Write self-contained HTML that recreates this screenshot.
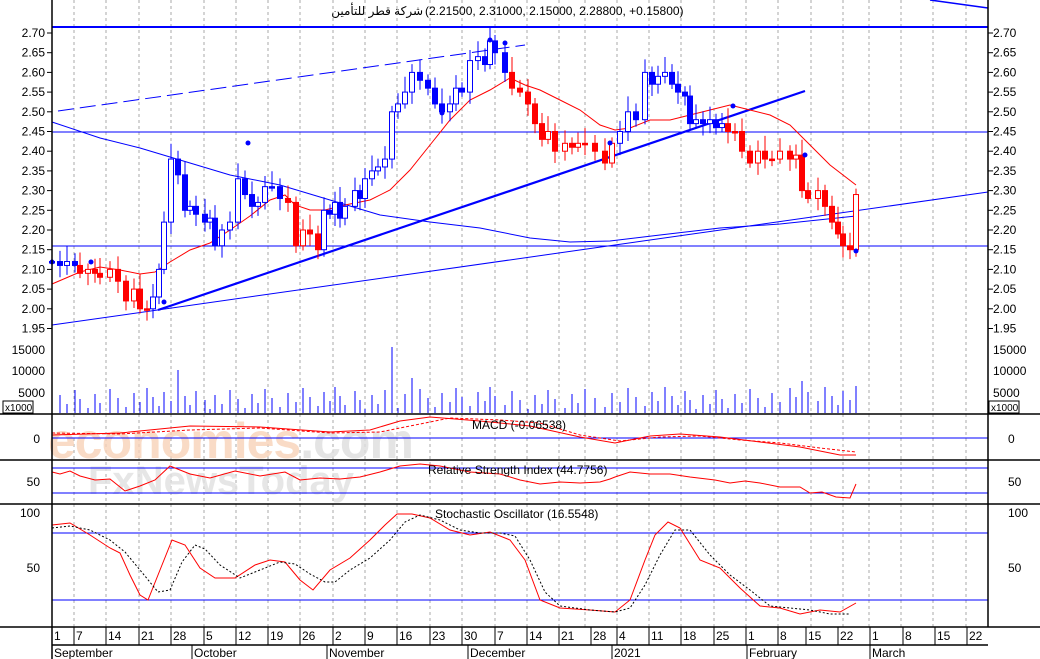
<!DOCTYPE html>
<html><head><meta charset="utf-8"><style>
html,body{margin:0;padding:0;background:#fff;}
svg{display:block;font-family:"Liberation Sans","DejaVu Sans",sans-serif;}
</style></head><body>
<svg id="s" width="1040" height="659" viewBox="0 0 1040 659" xmlns="http://www.w3.org/2000/svg">
<rect width="1040" height="659" fill="#fff"/>
<g id="grid" stroke="#aaa" stroke-dasharray="3,3" stroke-width="1"></g>
<text x="48" y="458" font-size="50" fill="#f8d3b8" opacity="0.8" font-weight="bold" letter-spacing="-1">economies<tspan fill="#dedede">.com</tspan></text>
<text x="88" y="494" font-size="40" fill="#e0e0e0" opacity="0.8" font-weight="bold">FxNewsToday</text>
<line x1="52" y1="27" x2="988" y2="27" stroke="#00f" stroke-width="2"/>
<line x1="52" y1="132" x2="988" y2="132" stroke="#00f"/>
<line x1="52" y1="246" x2="988" y2="246" stroke="#00f"/>
<line x1="930" y1="0" x2="988" y2="8" stroke="#00f" stroke-width="1.5"/>
<line x1="158" y1="310" x2="805" y2="91" stroke="#00f" stroke-width="2.2"/>
<line x1="52" y1="325" x2="988" y2="192" stroke="#00f"/>
<line x1="58" y1="111" x2="525" y2="45" stroke="#00f" stroke-dasharray="16,6"/>
<polyline fill="none" stroke="#00f" points="52,122 100,138 140,148 180,160 230,175 280,185 330,200 380,215 430,222 480,228 530,238 570,242 610,241 660,235 720,228 780,224 856,216"/>
<polyline fill="none" stroke="#f00" points="52,284 80,272 100,267 120,270 140,274 155,272 170,262 190,250 210,243 230,230 250,216 270,200 285,195 295,205 310,210 325,210 345,205 370,200 390,190 410,170 430,145 450,120 470,100 490,90 510,78 525,85 540,90 560,100 580,110 600,125 615,130 630,128 650,120 670,120 690,115 710,110 730,105 750,110 770,115 790,125 810,145 830,165 856,185"/>
<g id="candles"></g>
<g id="vol"></g>
<line x1="52" y1="438" x2="988" y2="438" stroke="#00f"/>
<polyline fill="none" stroke="#f00" points="52,435 120,433 190,426 260,427 330,432 370,430 400,421 430,417 480,421 530,426 580,437 615,443 650,436 680,434 720,437 760,442 800,447 840,455 856,455"/>
<polyline fill="none" stroke="#f00" stroke-dasharray="3,2" points="52,433 120,434 190,430 260,428 330,433 380,432 420,424 450,418 500,420 540,423 580,435 620,441 660,437 700,436 740,440 780,443 820,448 856,452"/>
<line x1="52" y1="468" x2="988" y2="468" stroke="#00f"/>
<line x1="52" y1="493" x2="988" y2="493" stroke="#00f"/>
<polyline fill="none" stroke="#f00" points="52,472 60,474 70,471 80,476 95,480 110,479 125,491 140,486 155,480 170,466 190,474 210,478 235,471 260,476 285,472 300,480 320,478 340,479 360,477 380,472 400,466 420,464 440,466 470,472 500,474 520,480 540,484 560,482 580,483 600,482 610,479 615,477 630,472 650,474 670,474 690,477 715,480 730,483 745,481 760,483 780,487 800,487 810,493 822,492 836,497 850,498 856,484"/>
<line x1="52" y1="533" x2="988" y2="533" stroke="#00f"/>
<line x1="52" y1="600" x2="988" y2="600" stroke="#00f"/>
<polyline fill="none" stroke="#f00" points="52,525 70,523 90,535 110,548 120,553 130,575 140,595 148,600 160,570 172,540 185,545 200,568 215,578 235,578 255,565 270,560 285,562 300,580 313,590 330,570 350,558 370,540 385,525 397,514 412,514 430,518 450,530 470,535 490,532 510,540 525,560 540,600 560,608 590,610 615,612 630,600 645,560 655,535 668,522 680,528 700,560 720,568 740,588 760,606 780,608 800,614 820,610 840,612 856,603"/>
<polyline fill="none" stroke="#000" stroke-dasharray="2,2" points="52,528 70,526 90,530 110,540 125,552 140,570 158,592 170,590 182,562 195,545 205,549 220,565 240,578 260,570 280,562 295,564 310,574 325,582 335,582 350,570 370,558 390,540 405,522 420,515 440,520 460,530 480,533 500,533 515,536 530,560 545,592 560,606 590,610 615,612 630,608 645,585 660,555 675,530 690,530 710,555 730,575 750,590 770,606 790,608 810,610 830,614 850,614"/>
<g stroke="#000" stroke-width="1.5">
<line x1="0" y1="414" x2="1040" y2="414"/>
<line x1="0" y1="460" x2="1040" y2="460"/>
<line x1="0" y1="504" x2="1040" y2="504"/>
<line x1="0" y1="627" x2="1040" y2="627"/>
<line x1="52" y1="0" x2="52" y2="659"/>
<line x1="988" y1="0" x2="988" y2="627"/>
<line x1="52" y1="645" x2="988" y2="645"/>
</g>
<g id="axes" font-size="12" fill="#000"></g>
<text x="423" y="15" font-size="12" text-anchor="end" font-family="Liberation Sans, DejaVu Sans, sans-serif">شركة قطر للتأمين</text>
<text x="425" y="15" font-size="12">(2.21500, 2.31000, 2.15000, 2.28800, +0.15800)</text>
<text x="472" y="429" font-size="12">MACD (-0.06538)</text>
<text x="428" y="474" font-size="12">Relative Strength Index (44.7756)</text>
<text x="435" y="518" font-size="12">Stochastic Oscillator (16.5548)</text>
<rect x="3" y="401" width="30" height="12" fill="#fff" stroke="#000"/>
<text x="5" y="411" font-size="10">x1000</text>
<rect x="989" y="401" width="30" height="12" fill="#fff" stroke="#000"/>
<text x="991" y="411" font-size="10">x1000</text>
</svg>
<script>
var NS="http://www.w3.org/2000/svg";
function el(p,t,a,txt){var e=document.createElementNS(NS,t);for(var k in a)e.setAttribute(k,a[k]);if(txt!=null)e.textContent=txt;document.getElementById(p).appendChild(e);return e;}
var gx=[74,106,139,171,204,236,268,300,333,365,397,430,462,495,527,559,585,617,649,681,714,746,778,811,843,869,901,933,966];
gx.forEach(function(x){el("grid","line",{x1:x,y1:0,x2:x,y2:627});});
function py(p){return 33+(2.70-p)/0.05*19.7;}
for(var i=0;i<=15;i++){var p=2.70-i*0.05,y=py(p);var s=p.toFixed(2);
el("axes","text",{x:45,y:y+4,"text-anchor":"end"},s);el("axes","text",{x:993,y:y+4},s);
el("axes","line",{x1:47,y1:y,x2:52,y2:y,stroke:"#000"});el("axes","line",{x1:988,y1:y,x2:993,y2:y,stroke:"#000"});}
[[15000,350],[10000,371],[5000,393]].forEach(function(v){el("axes","text",{x:45,y:v[1]+4,"text-anchor":"end"},v[0]);el("axes","text",{x:993,y:v[1]+4},v[0]);});
[[0,438],[50,481]].forEach(function(v){el("axes","text",{x:40,y:v[1]+5,"text-anchor":"end"},v[0]);el("axes","text",{x:1008,y:v[1]+5},v[0]);});
[[100,512],[50,567]].forEach(function(v){el("axes","text",{x:40,y:v[1]+5,"text-anchor":"end"},v[0]);el("axes","text",{x:1008,y:v[1]+5},v[0]);});
var dl=[[52,"1"],[74,"7"],[106,"14"],[139,"21"],[171,"28"],[204,"5"],[236,"12"],[268,"19"],[300,"26"],[333,"2"],[365,"9"],[397,"16"],[430,"23"],[462,"30"],[495,"7"],[527,"14"],[559,"21"],[591,"28"],[617,"4"],[649,"11"],[681,"18"],[714,"25"],[746,"1"],[778,"8"],[806,"15"],[838,"22"],[870,"1"],[903,"8"],[935,"15"],[967,"22"]];
dl.forEach(function(d){el("axes","text",{x:d[0]+2,y:640},d[1]);el("axes","line",{x1:d[0],y1:627,x2:d[0],y2:645,stroke:"#000"});});
[[52,"September"],[192,"October"],[327,"November"],[468,"December"],[612,"2021"],[747,"February"],[870,"March"]].forEach(function(m){el("axes","text",{x:m[0]+2,y:657},m[1]);el("axes","line",{x1:m[0],y1:645,x2:m[0],y2:659,stroke:"#000"});});
var d=[[52,2.12],[60,2.11],[67,2.12],[75,2.11],[80,2.09],[88,2.10],[95,2.09],[100,2.08],[110,2.10],[118,2.07],[126,2.02],[134,2.05],[140,2.00],[147,2.00],[153,2.03],[159,2.10],[164,2.22],[171,2.38],[178,2.34],[185,2.25],[190,2.26],[196,2.24],[205,2.22],[210,2.23],[215,2.16],[222,2.20],[230,2.22],[238,2.33],[245,2.29],[252,2.26],[258,2.27],[265,2.31],[272,2.31],[280,2.28],[288,2.27],[296,2.16],[303,2.20],[310,2.19],[318,2.15],[324,2.25],[330,2.24],[335,2.27],[340,2.23],[345,2.26],[355,2.30],[360,2.28],[365,2.33],[372,2.35],[378,2.36],[385,2.38],[392,2.50],[398,2.52],[405,2.55],[412,2.60],[420,2.58],[428,2.56],[435,2.52],[442,2.50],[450,2.52],[456,2.56],[462,2.55],[470,2.63],[478,2.64],[485,2.62],[490,2.68],[495,2.65],[505,2.60],[512,2.56],[520,2.55],[528,2.52],[535,2.47],[542,2.43],[548,2.45],[555,2.40],[565,2.42],[572,2.41],[578,2.42],[585,2.42],[595,2.40],[605,2.37],[612,2.42],[620,2.45],[628,2.50],[636,2.48],[645,2.60],[652,2.57],[658,2.59],[665,2.60],[672,2.57],[678,2.55],[685,2.54],[690,2.47],[696,2.48],[703,2.47],[710,2.48],[716,2.46],[722,2.47],[728,2.45],[735,2.45],[742,2.40],[750,2.37],[758,2.40],[765,2.38],[772,2.38],[780,2.40],[790,2.38],[796,2.39],[802,2.30],[808,2.28],[818,2.30],[825,2.26],[832,2.22],[838,2.19],[843,2.16],[850,2.15],[856,2.29]];
var red=function(x){return (x>=80&&x<=152)||(x>=286&&x<=320)||(x>=512&&x<=612)||(x>=728&&x<=852)||x==856;};
var prev=2.12;
d.forEach(function(c,i){var o=prev,cl=c[1],x=c[0],col=red(x)?"#f00":"#00f";
var hi=Math.max(o,cl)+0.015+((i*7)%5)*0.006,lo=Math.min(o,cl)-0.012-((i*3)%4)*0.006;
el("candles","line",{x1:x,y1:py(hi),x2:x,y2:py(lo),stroke:col});
var t=py(Math.max(o,cl)),b=py(Math.min(o,cl));if(b-t<1.5)b=t+1.5;
el("candles","rect",{x:x-2.5,y:t,width:5,height:b-t,fill:cl>o?"#fff":col,stroke:col});
prev=cl;
var vh=4+((i*37)%23);if(x==392)vh=66;if(x==178)vh=43;if(x==802)vh=32;if(x==856)vh=27;if(x==412)vh=35;if(x==648)vh=38;
el("vol","line",{x1:x,y1:413,x2:x,y2:413-vh,stroke:"#00f"});});
[[52,262],[91,262],[164,302],[248,143],[442,113],[490,40],[505,43],[610,143],[733,106],[805,155],[856,251]].forEach(function(p){el("candles","circle",{cx:p[0],cy:p[1],r:2.5,fill:"#00f"});});
</script>
</body></html>
